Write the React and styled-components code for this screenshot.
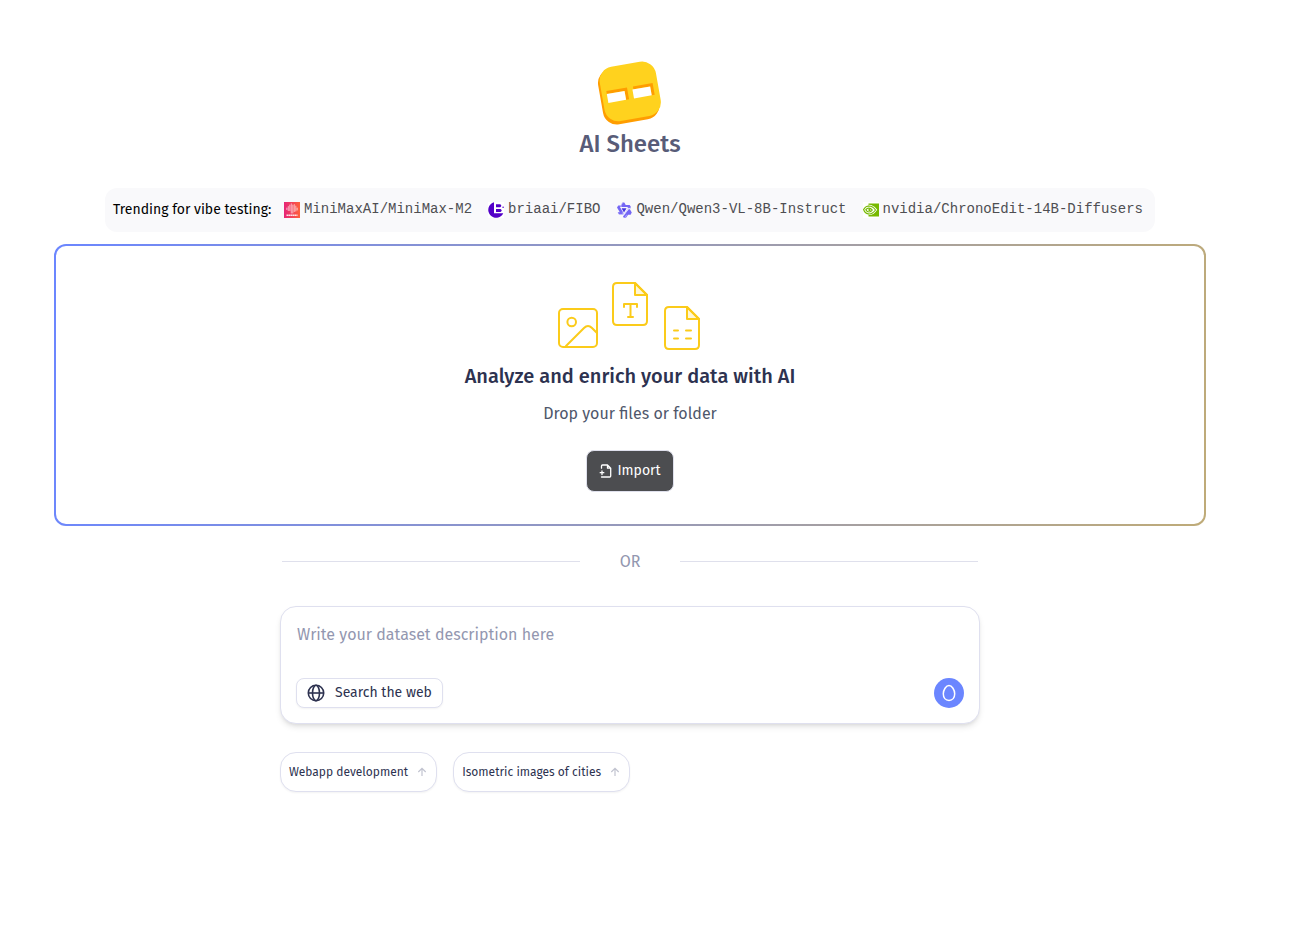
import React from "react";
import styled, { createGlobalStyle } from "styled-components";

const GlobalStyle = createGlobalStyle`
  *, *::before, *::after { box-sizing: border-box; }
  body {
    margin: 0;
    background: #fff;
    color: #000;
    font-family: "Fira Sans", Roboto, "Noto Sans", sans-serif;
    font-size: 16px;
    line-height: 24px;
  }
  button, textarea { font: inherit; color: inherit; }
`;

const Page = styled.main`
  display: flex;
  flex-direction: column;
  align-items: center;
  padding: 60px 95px 60px 54px;
`;

const Brand = styled.header`
  display: flex;
  flex-direction: column;
  align-items: center;
`;

const Title = styled.h1`
  margin: 0;
  font-size: 24px;
  line-height: 36px;
  font-weight: 500;
  color: #585c78;
`;

const Trending = styled.nav`
  display: flex;
  align-items: center;
  gap: 12px;
  height: 44px;
  margin-top: 26px;
  padding: 0 12px 0 8px;
  border-radius: 12px;
  background: #f9f9fb;
  font-size: 14px;
  white-space: nowrap;
`;

const TrendingLabel = styled.span`
  min-width: 159px;
`;

const ModelList = styled.div`
  display: flex;
  gap: 16px;
`;

const ModelLink = styled.a`
  display: flex;
  align-items: center;
  gap: 4px;
  color: #4e4e52;
  text-decoration: none;
  font-family: "Liberation Mono", monospace;
  line-height: 20px;
`;

const ModelName = styled.span`
  padding-bottom: 2px;
`;

const DropZone = styled.section`
  display: flex;
  flex-direction: column;
  align-items: center;
  width: 100%;
  max-width: 1152px;
  height: 282px;
  margin-top: 12px;
  padding-top: 34px;
  border: 2px solid transparent;
  border-radius: 12px;
  background:
    linear-gradient(#fff, #fff) padding-box,
    linear-gradient(97deg, #6b86ff 0%, #bfab78 100%) border-box;
`;

const Heading = styled.h2`
  margin: 8px 0 0;
  font-size: 20px;
  line-height: 32px;
  font-weight: 500;
  color: #2d3250;
`;

const Hint = styled.p`
  margin: 10px 0 0;
  color: #4f576b;
`;

const ImportButton = styled.button`
  display: flex;
  align-items: center;
  justify-content: center;
  gap: 4px;
  width: 88px;
  height: 42px;
  margin-top: 24px;
  padding: 0;
  border: 1px solid #dfe0ec;
  border-radius: 8px;
  background: #4c4d50;
  color: #fff;
  font-size: 14px;
`;

const Composer = styled.div`
  width: 100%;
  max-width: 700px;
`;

const Divider = styled.div`
  display: flex;
  align-items: center;
  gap: 40px;
  margin: 24px 2px 33px;
  line-height: 23px;
  color: #9397b0;

  &::before, &::after {
    content: "";
    flex: 1;
    height: 1px;
    background: #dfe0ec;
  }
`;

const PromptBox = styled.form`
  display: flex;
  flex-direction: column;
  justify-content: space-between;
  height: 118px;
  padding: 15px;
  border: 1px solid #dfe0ef;
  border-radius: 16px;
  background: #fff;
  box-shadow: 0 4px 6px -1px rgba(0, 0, 0, 0.1), 0 2px 4px -2px rgba(0, 0, 0, 0.1);
`;

const PromptInput = styled.textarea`
  display: block;
  width: 100%;
  height: 48px;
  padding: 1px;
  border: 0;
  outline: 0;
  resize: none;
  background: transparent;
  color: #2d3250;

  &::placeholder { color: #9397b0; opacity: 1; }
`;

const Actions = styled.div`
  display: flex;
  align-items: center;
  justify-content: space-between;
`;

const SearchButton = styled.button`
  display: flex;
  align-items: center;
  gap: 10px;
  height: 30px;
  min-width: 147px;
  padding: 0 10px;
  border: 1px solid #dfe0ef;
  border-radius: 8px;
  background: #fff;
  color: #2d3250;
  font-size: 14px;
  box-shadow: 0 1px 2px rgba(0, 0, 0, 0.05);
`;

const SendButton = styled.button`
  display: grid;
  place-items: center;
  width: 30px;
  height: 30px;
  padding: 0;
  border: 0;
  border-radius: 50%;
  background: #6b86ff;
  color: #fff;
`;

const Suggestions = styled.div`
  display: flex;
  gap: 16px;
  margin-top: 28px;
`;

const Suggestion = styled.button`
  display: flex;
  align-items: center;
  gap: 8px;
  height: 40px;
  padding: 0 8px;
  border: 1px solid #dfe0ef;
  border-radius: 16px;
  background: #fff;
  color: #2d3250;
  font-size: 12px;
  box-shadow: 0 1px 2px rgba(0, 0, 0, 0.05);
`;

const Logo = () => (
  <svg width="66" height="66" viewBox="0 0 66 66" aria-hidden="true">
    <g transform="rotate(-10 33 33)">
      <rect x="3" y="6" width="57" height="56" rx="14" fill="#ff9d00" />
      <rect x="5" y="4" width="57" height="55" rx="14" fill="#ffd21e" />
      <path d="M10 27h21v12h-3v-9H10zM37 27h20v12h-3v-9H37z" fill="#ff9d00" />
      <path d="M10 30h18v9H10zM36 30h18v9H36z" fill="#fff" />
    </g>
  </svg>
);

const MiniMaxIcon = () => (
  <svg width="16" height="16" viewBox="0 0 16 16" aria-hidden="true">
    <defs>
      <linearGradient id="minimax"><stop stopColor="#e62578" /><stop offset="1" stopColor="#ff603a" /></linearGradient>
    </defs>
    <path fill="url(#minimax)" d="M0 0h16v16H0z" />
    <path d="M2.800 6v1.500M4.300 4.500v4M5.800 3v5.500M7.300 1.800v9.200M8.800 3v8M10.300 2.500v7M11.800 4v5M13.200 6v2" stroke="#fff" strokeOpacity=".55" strokeWidth="1.100" strokeLinecap="round" />
    <path d="M2.500 13.200h11" stroke="#fff" strokeOpacity=".85" strokeWidth="1.600" strokeDasharray="1.700 .3" />
  </svg>
);

const BriaIcon = () => (
  <svg width="16" height="16" viewBox="0 0 16 16" aria-hidden="true">
    <path fill="#fff" d="M0 0h16v16H0z" />
    <path d="M6 .3A7.900 7.900 0 1 0 15.300 11.300H6z" fill="#5200c8" />
    <path d="M8 2.300h3.400c1.200 0 1.900.6 1.900 1.500s-.7 1.500-1.900 1.500H8zM8 6.900h3.700c1.200 0 2 .6 2 1.500s-.8 1.500-2 1.500H8z" fill="#5200c8" />
    <circle cx="15.100" cy="5.300" r=".8" fill="#5200c8" />
  </svg>
);

const QwenIcon = () => (
  <svg width="16" height="16" viewBox="0 0 16 16" aria-hidden="true">
    <g fill="#7466f5">
      <path d="M6.500.6l1.800 0 1.400 2.300h4l1.200 2.200-.6 1H6.300L5 3.400z" />
      <path d="M2.300 3.400h2.500l3.700 6.500-1.500 2.600H3L1.700 10.300h2.100L1 5.500z" />
      <path d="M12.700 7.200h1.200l1.900 3.300-1.200 2.300h-2.500L10 15.800H7.800l-.8-1.300z" />
    </g>
    <path d="M6.400 1l-2 3.600 1.100 1.900M15 6.300h-3l-4 7M3 12.400h4.500l-1.300-2M9 15.700l1.700-3" fill="none" stroke="#c9c4fc" strokeWidth=".7" />
    <path d="M4 5h8L8 12z" fill="#f9f9fb" />
    <path d="M5.600 6.200h4.900L8 10.500z" fill="#4636e0" />
  </svg>
);

const NvidiaIcon = () => (
  <svg width="16" height="16" viewBox="0 0 16 16" aria-hidden="true">
    <path fill="#fff" d="M0 0h16v16H0z" />
    <path fill="#76b900" d="M5.500 1.500H16v13H5.500z" />
    <path d="M5.500 2.700c4 0 6.500 2 8.700 5-2.200 3.400-4.700 5.400-8.700 5.300z" fill="#fff" />
    <path d="M.6 7.500c1.300-2.300 2.900-3.400 5.200-3.500 2.900 0 5 1.500 6.700 4-1.700 2.300-3.900 4-6.400 4C3.600 11.800 1.500 10.300.6 7.500z" fill="#fff" stroke="#76b900" strokeWidth="1.200" />
    <path d="M2.800 7.800c.8-1.200 1.700-1.700 3-1.700 1.500 0 2.600.7 3.500 1.900-.9 1.300-2 2-3.200 2C4.600 10 3.600 9.200 2.800 7.800z" fill="none" stroke="#76b900" strokeWidth="1.200" />
    <path d="M5.500 7.100c1.200-.1 1.900.4 2.400 1.100-.7.800-1.500 1.100-2.400.8z" fill="#76b900" />
  </svg>
);

const FilesArt = () => (
  <svg width="144" height="72" viewBox="0 0 144 72" fill="none" stroke="#fbcb1a" strokeWidth="2" strokeLinecap="round" strokeLinejoin="round" aria-hidden="true">
    <rect x="1" y="29" width="38" height="38" rx="4" />
    <circle cx="13.700" cy="42" r="4.300" />
    <path d="M8 66l18-18q4-4 8 0l5 5" />
    <path d="M77 3v12h12z" fill="#fff7d6" />
    <path d="M59 3h18l12 12v26q0 4-4 4H59q-4 0-4-4V7q0-4 4-4z" />
    <path d="M66 27v-3h13v3M72.500 24v12M70 37h5" />
    <path d="M129 27v12h12z" fill="#fff7d6" />
    <path d="M111 27h18l12 12v26q0 4-4 4h-26q-4 0-4-4V31q0-4 4-4z" />
    <path d="M116 50.500h4M128 50.500h5M116 58.500h4M128 58.500h5" />
  </svg>
);

const ImportIcon = () => (
  <svg width="14" height="14" viewBox="0 0 14 14" fill="none" stroke="currentColor" strokeWidth="1.300" strokeLinecap="round" strokeLinejoin="round" aria-hidden="true">
    <path d="M2.500 4.200V2q0-1 1-1H8.500l3.200 3.200V12q0 1-1 1H2.500M8.500 1v3.200h3.200M1.200 8.700h3.600M3 6.900v3.600" />
  </svg>
);

const GlobeIcon = () => (
  <svg width="18" height="18" viewBox="0 0 18 18" fill="none" stroke="currentColor" strokeWidth="1.600" aria-hidden="true">
    <circle cx="9" cy="9" r="7.700" />
    <ellipse cx="9" cy="9" rx="3.500" ry="7.700" />
    <path d="M1.300 9h15.400" />
  </svg>
);

const EggIcon = () => (
  <svg width="14" height="18" viewBox="0 0 14 18" fill="none" stroke="currentColor" strokeWidth="1.500" aria-hidden="true">
    <path d="M7 1.500C4 1.500 1.300 6 1.300 9.800c0 3.900 2.200 6.600 5.700 6.600s5.700-2.700 5.700-6.600C12.700 6 10 1.500 7 1.500z" />
  </svg>
);

const ArrowIcon = () => (
  <svg width="12" height="12" viewBox="0 0 12 12" fill="none" stroke="#c2c4d0" strokeWidth="1.200" aria-hidden="true">
    <path d="M6 10V2.500M2.300 6L6 2.300 9.700 6" />
  </svg>
);

const models = [
  { name: "MiniMaxAI/MiniMax-M2", Icon: MiniMaxIcon },
  { name: "briaai/FIBO", Icon: BriaIcon },
  { name: "Qwen/Qwen3-VL-8B-Instruct", Icon: QwenIcon },
  { name: "nvidia/ChronoEdit-14B-Diffusers", Icon: NvidiaIcon },
];

const suggestions = ["Webapp development", "Isometric images of cities"];

export default function App() {
  return (
    <>
      <GlobalStyle />
      <Page>
        <Brand>
          <Logo />
          <Title>AI Sheets</Title>
        </Brand>
        <Trending aria-label="Trending models">
          <TrendingLabel>Trending for vibe testing:</TrendingLabel>
          <ModelList>
            {models.map(({ name, Icon }) => (
              <ModelLink href="#" key={name}>
                <Icon />
                <ModelName>{name}</ModelName>
              </ModelLink>
            ))}
          </ModelList>
        </Trending>
        <DropZone>
          <FilesArt />
          <Heading>Analyze and enrich your data with AI</Heading>
          <Hint>Drop your files or folder</Hint>
          <ImportButton type="button">
            <ImportIcon />
            Import
          </ImportButton>
        </DropZone>
        <Composer>
          <Divider>OR</Divider>
          <PromptBox onSubmit={(event) => event.preventDefault()}>
            <PromptInput aria-label="Dataset description" placeholder="Write your dataset description here" />
            <Actions>
              <SearchButton type="button">
                <GlobeIcon />
                Search the web
              </SearchButton>
              <SendButton type="submit" aria-label="Create dataset">
                <EggIcon />
              </SendButton>
            </Actions>
          </PromptBox>
          <Suggestions>
            {suggestions.map((text) => (
              <Suggestion type="button" key={text}>
                {text}
                <ArrowIcon />
              </Suggestion>
            ))}
          </Suggestions>
        </Composer>
      </Page>
    </>
  );
}
